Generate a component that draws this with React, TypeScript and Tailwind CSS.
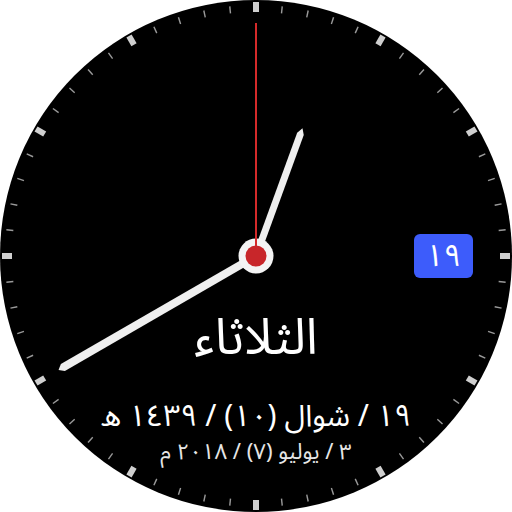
import React from 'react'

const ticks = Array.from({ length: 60 }, (_, i) => i)

function Dial() {
  return (
    <svg className="absolute inset-0 pointer-events-none" width="512" height="512" viewBox="0 0 512 512">
      {ticks.map((i) =>
        i % 5 === 0 ? (
          <rect key={i} x="253" y="2" width="6" height="10" fill="#cfcfcf" transform={`rotate(${i * 6} 256 256)`} />
        ) : (
          <rect key={i} x="255.3" y="5" width="1.4" height="7" fill="#9a9a9a" transform={`rotate(${i * 6} 256 256)`} />
        )
      )}
      {/* minute hand */}
      <polygon points="252,256 260,256 260,33 256,28 252,33" fill="#efefef" transform="rotate(240 256 256)" />
      {/* hour hand */}
      <polygon points="252.5,256 259.5,256 259.5,126 256,120 252.5,126" fill="#efefef" transform="rotate(20 256 256)" />
      <circle cx="256" cy="256" r="17.5" fill="#f4f4f4" />
      <line x1="256" y1="23" x2="256" y2="256" stroke="#d42a2a" strokeWidth="2" />
      <circle cx="256" cy="256" r="10.5" fill="#c8262a" />
    </svg>
  )
}

export default function App() {
  return (
    <div className="w-[512px] h-[512px] bg-white">
      <div
        className="relative w-[512px] h-[512px] rounded-full bg-black overflow-hidden"
        dir="rtl"
        style={{ fontFamily: '"Noto Sans Arabic", "Noto Kufi Arabic", "DejaVu Sans", sans-serif' }}
      >
        <div className="flex flex-col items-center pt-[310px] text-white">
          <div className="text-[50px] leading-[56px]">الثلاثاء</div>
          <div className="mt-[33px] text-[30px] leading-[36px]">١٩ / شوال (١٠) / ١٤٣٩ ه</div>
          <div className="mt-[4px] text-[22px] leading-[26px] text-[#e6e6e6]">٣ / يوليو (٧) / ٢٠١٨ م</div>
        </div>
        <div className="absolute left-[414px] top-[234px] w-[59px] h-[44px] rounded-[6px] bg-[#3d5cfb] flex items-center justify-center text-white text-[31px]">
          ١٩
        </div>
        <Dial />
      </div>
    </div>
  )
}
